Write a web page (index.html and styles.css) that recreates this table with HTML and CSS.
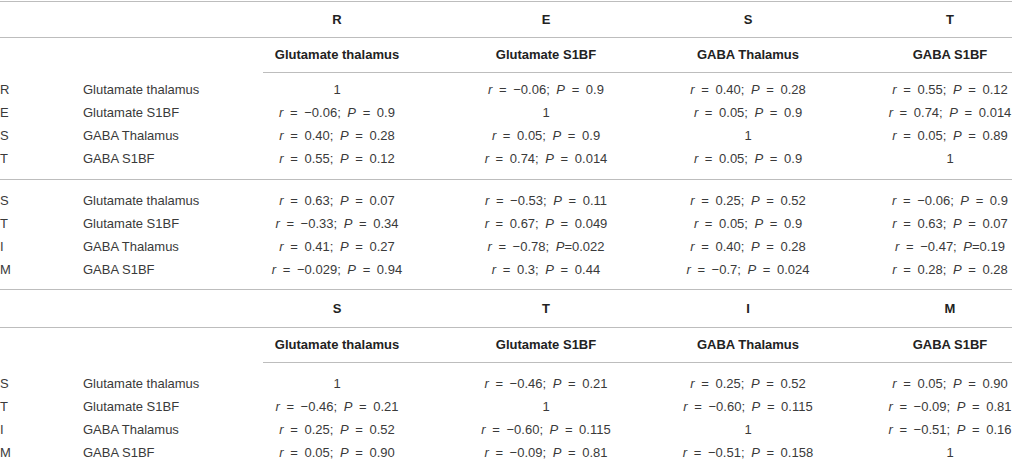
FILE: index.html
```html
<!DOCTYPE html>
<html lang="en">
<head>
<meta charset="utf-8">
<title>Correlation table</title>
<link rel="stylesheet" href="styles.css">
</head>
<body>
<table class="corr">
  <colgroup>
    <col class="c-id"><col class="c-name"><col class="c-d1"><col class="c-d2"><col class="c-d3"><col class="c-d4">
  </colgroup>
  <tbody>
    <tr class="group-head top">
      <th></th><th></th><th class="d1">R</th><th>E</th><th>S</th><th>T</th>
    </tr>
    <tr class="sub-head">
      <th class="blank"></th><th class="blank"></th><th class="d1">Glutamate thalamus</th><th>Glutamate S1BF</th><th>GABA Thalamus</th><th>GABA S1BF</th>
    </tr>
  </tbody>
  <tbody class="block b1">
    <tr class="first">
      <td class="id">R</td><td class="name">Glutamate thalamus</td>
      <td class="d1">1</td>
      <td><i>r</i> = −0.06; <i>P</i> = 0.9</td>
      <td><i>r</i> = 0.40; <i>P</i> = 0.28</td>
      <td><i>r</i> = 0.55; <i>P</i> = 0.12</td>
    </tr>
    <tr>
      <td class="id">E</td><td class="name">Glutamate S1BF</td>
      <td class="d1"><i>r</i> = −0.06; <i>P</i> = 0.9</td>
      <td>1</td>
      <td><i>r</i> = 0.05; <i>P</i> = 0.9</td>
      <td><i>r</i> = 0.74; <i>P</i> = 0.014</td>
    </tr>
    <tr>
      <td class="id">S</td><td class="name">GABA Thalamus</td>
      <td class="d1"><i>r</i> = 0.40; <i>P</i> = 0.28</td>
      <td><i>r</i> = 0.05; <i>P</i> = 0.9</td>
      <td>1</td>
      <td><i>r</i> = 0.05; <i>P</i> = 0.89</td>
    </tr>
    <tr class="last">
      <td class="id">T</td><td class="name">GABA S1BF</td>
      <td class="d1"><i>r</i> = 0.55; <i>P</i> = 0.12</td>
      <td><i>r</i> = 0.74; <i>P</i> = 0.014</td>
      <td><i>r</i> = 0.05; <i>P</i> = 0.9</td>
      <td>1</td>
    </tr>
  </tbody>
  <tbody class="block b2">
    <tr class="first">
      <td class="id">S</td><td class="name">Glutamate thalamus</td>
      <td class="d1"><i>r</i> = 0.63; <i>P</i> = 0.07</td>
      <td><i>r</i> = −0.53; <i>P</i> = 0.11</td>
      <td><i>r</i> = 0.25; <i>P</i> = 0.52</td>
      <td><i>r</i> = −0.06; <i>P</i> = 0.9</td>
    </tr>
    <tr>
      <td class="id">T</td><td class="name">Glutamate S1BF</td>
      <td class="d1"><i>r</i> = −0.33; <i>P</i> = 0.34</td>
      <td><i>r</i> = 0.67; <i>P</i> = 0.049</td>
      <td><i>r</i> = 0.05; <i>P</i> = 0.9</td>
      <td><i>r</i> = 0.63; <i>P</i> = 0.07</td>
    </tr>
    <tr>
      <td class="id">I</td><td class="name">GABA Thalamus</td>
      <td class="d1"><i>r</i> = 0.41; <i>P</i> = 0.27</td>
      <td><i>r</i> = −0.78; <i>P</i>=0.022</td>
      <td><i>r</i> = 0.40; <i>P</i> = 0.28</td>
      <td><i>r</i> = −0.47; <i>P</i>=0.19</td>
    </tr>
    <tr class="last">
      <td class="id">M</td><td class="name">GABA S1BF</td>
      <td class="d1"><i>r</i> = −0.029; <i>P</i> = 0.94</td>
      <td><i>r</i> = 0.3; <i>P</i> = 0.44</td>
      <td><i>r</i> = −0.7; <i>P</i> = 0.024</td>
      <td><i>r</i> = 0.28; <i>P</i> = 0.28</td>
    </tr>
  </tbody>
  <tbody>
    <tr class="group-head second">
      <th></th><th></th><th class="d1">S</th><th>T</th><th>I</th><th>M</th>
    </tr>
    <tr class="sub-head">
      <th class="blank"></th><th class="blank"></th><th class="d1">Glutamate thalamus</th><th>Glutamate S1BF</th><th>GABA Thalamus</th><th>GABA S1BF</th>
    </tr>
  </tbody>
  <tbody class="block b3">
    <tr class="first">
      <td class="id">S</td><td class="name">Glutamate thalamus</td>
      <td class="d1">1</td>
      <td><i>r</i> = −0.46; <i>P</i> = 0.21</td>
      <td><i>r</i> = 0.25; <i>P</i> = 0.52</td>
      <td><i>r</i> = 0.05; <i>P</i> = 0.90</td>
    </tr>
    <tr>
      <td class="id">T</td><td class="name">Glutamate S1BF</td>
      <td class="d1"><i>r</i> = −0.46; <i>P</i> = 0.21</td>
      <td>1</td>
      <td><i>r</i> = −0.60; <i>P</i> = 0.115</td>
      <td><i>r</i> = −0.09; <i>P</i> = 0.81</td>
    </tr>
    <tr>
      <td class="id">I</td><td class="name">GABA Thalamus</td>
      <td class="d1"><i>r</i> = 0.25; <i>P</i> = 0.52</td>
      <td><i>r</i> = −0.60; <i>P</i> = 0.115</td>
      <td>1</td>
      <td><i>r</i> = −0.51; <i>P</i> = 0.16</td>
    </tr>
    <tr class="last">
      <td class="id">M</td><td class="name">GABA S1BF</td>
      <td class="d1"><i>r</i> = 0.05; <i>P</i> = 0.90</td>
      <td><i>r</i> = −0.09; <i>P</i> = 0.81</td>
      <td><i>r</i> = −0.51; <i>P</i> = 0.158</td>
      <td>1</td>
    </tr>
  </tbody>
</table>
</body>
</html>
```
FILE: styles.css
```css
html, body {
  margin: 0;
  padding: 0;
  background: #ffffff;
}

body {
  overflow: hidden;
  font-family: "Liberation Sans", Arial, Helvetica, sans-serif;
  font-size: 13px;
  color: #3a3a3a;
}

.corr {
  border-collapse: collapse;
  table-layout: fixed;
  width: 1077px;
  margin-top: 1px;
}

.c-id { width: 83px; }
.c-name { width: 180px; }
.c-d1 { width: 156px; }
.c-d2 { width: 254px; }
.c-d3 { width: 150px; }
.c-d4 { width: 254px; }

.corr th,
.corr td {
  padding: 0;
  text-align: center;
  white-space: nowrap;
  vertical-align: middle;
}

.corr td {
  word-spacing: 3px;
}

.corr th {
  font-weight: bold;
  color: #222222;
}

.corr .d1 {
  padding-right: 8px;
}

.corr td.id,
.corr td.name {
  text-align: left;
  word-spacing: 0;
}

.group-head th {
  line-height: 35px;
  border-bottom: 1px solid #bdbdbd;
}

.group-head.top th {
  border-top: 1px solid #bdbdbd;
}

.group-head.second th {
  line-height: 37px;
}

.sub-head th {
  line-height: 34px;
  border-bottom: 1px solid #bdbdbd;
}

.sub-head th.blank {
  border-bottom: none;
}

.block td {
  line-height: 23px;
}

.block tr.first td {
  padding-top: 5px;
}

.block.b2 tr.first td {
  padding-top: 9px;
}

.block.b3 tr.first td {
  padding-top: 9px;
}

.block tr.last td {
  padding-bottom: 9px;
  border-bottom: 1px solid #bdbdbd;
}

.block.b2 tr.last td {
  padding-bottom: 8px;
}

.corr i {
  font-style: italic;
}
```
